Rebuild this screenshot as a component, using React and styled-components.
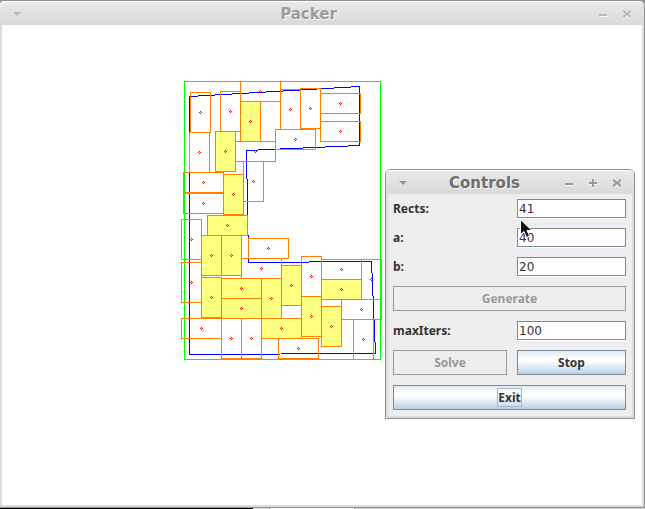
import React from "react";
import styled, { createGlobalStyle } from "styled-components";

const GlobalStyle = createGlobalStyle`
  * { box-sizing: border-box; }
  html, body, #root { height: 100%; margin: 0; }
  body { background: #8f8f8f; overflow: hidden; }
`;

const Desktop = styled.main`
  height: 100%;
  display: flex;
  flex-direction: column;
  position: relative;
  font-family: "DejaVu Sans", sans-serif;
`;

const MainWindow = styled.section`
  flex: 1;
  min-height: 0;
  display: flex;
  flex-direction: column;
  background: #dcdcdc;
  border: solid #8f8f8f;
  border-width: 1px 1px 1px 0;
  border-radius: 3px 5px 0 0;
  padding: 0 2px 2px;
`;

const ControlsWindow = styled.section`
  position: absolute;
  left: 385px;
  top: 169px;
  width: 250px;
  background: #dcdcdc;
  border: 1px solid #909090;
  border-radius: 6px 6px 0 0;
  padding: 0 2px 2px;
`;

const TitleBar = styled.header`
  flex: none;
  display: grid;
  grid-template-columns: auto 1fr auto;
  align-items: center;
  height: 24px;
  margin: 0 -2px;
  padding: 0 9px 0 12px;
  border-top: 1px solid #fff;
  border-radius: 5px 5px 0 0;
  background: linear-gradient(#e9e9e9, #d9d9d9);
  color: ${(p) => (p.$active ? "#6f6f6f" : "#9d9d9d")};
`;

const Title = styled.h1`
  margin: 0;
  text-align: center;
  font-size: 15px;
  line-height: 20px;
  font-weight: bold;
  text-shadow: 1px 1px 0 #f5f5f5;
`;

const WindowButtons = styled.div`
  display: flex;
  justify-content: flex-end;
  gap: 8px;
`;

const WindowButton = styled.button`
  display: block;
  width: 16px;
  height: 16px;
  padding: 0;
  border: 0;
  background: none;
  color: ${(p) => (p.$active ? "#989898" : "#b8b8b8")};
`;

const MenuButton = styled(WindowButton)`
  width: 10px;
`;

const Canvas = styled.div`
  flex: 1;
  min-height: 0;
  background: #fff;
  overflow: hidden;
`;

const Drawing = styled.svg`
  display: block;
`;

const Panel = styled.form`
  display: grid;
  grid-template-columns: 114px 1fr;
  gap: 10px;
  align-items: center;
  background: #eee;
  padding: 5px 6px 6px 5px;
  color: #333;
`;

const Label = styled.label`
  font: bold 12px/19px "Noto Sans", sans-serif;
`;

const Field = styled.input`
  width: 100%;
  height: 19px;
  padding: 0 1px;
  border: 1px solid #7a8a99;
  border-radius: 0;
  outline: 0;
  background: #fff;
  box-shadow: 0 1px 0 #fff;
  color: #333;
  font: 12px/16px "DejaVu Sans", sans-serif;
`;

const Button = styled.button`
  height: 25px;
  padding: 0;
  grid-column: ${(p) => (p.$wide ? "1 / -1" : "auto")};
  border: 1px solid #7a8a99;
  background: linear-gradient(#dde8f3 0%, #fff 32%, #fff 44%, #b8cfe5 100%);
  color: #333;
  font: bold 12px/16px "Noto Sans", sans-serif;

  &:disabled {
    border-color: #999;
    background: #eee;
    color: #999;
  }
`;

const FocusText = styled.span`
  outline: 1px solid #a3b8cc;
`;

const Pointer = styled.svg`
  position: absolute;
  left: 520px;
  top: 219px;
  pointer-events: none;
`;

const Strip = styled.footer`
  height: 1px;
  display: grid;
  grid-template-columns: 253px 16px 1px 84px 1px 1fr;
  background: #ccc;
`;

const StripPart = styled.span`
  background: ${(p) => p.$tone};
`;

const OPEN = [
  [190, 92, 0], [220, 91, 0], [240, 81, 1], [189, 132, 0], [235, 141, 1],
  [243, 161, 0], [280, 89, 0], [300, 88, 0], [275, 129, 1], [320, 93, 1],
  [320, 121, 1], [183, 172, 1], [183, 193, 1], [181, 219, 0], [248, 238, 1],
  [241, 258, 1], [181, 262, 0], [181, 318, 1], [221, 318, 0], [241, 318, 0],
  [301, 256, 0], [321, 259, 1], [361, 259, 0], [341, 299, 1], [353, 319, 0],
  [278, 338, 1],
];

const FILLED = [
  [240, 101, 0], [215, 131, 0], [223, 174, 0], [207, 215, 1], [201, 235, 0],
  [221, 235, 0], [201, 277, 0], [221, 278, 1], [221, 298, 1], [261, 278, 0],
  [261, 318, 1], [281, 265, 0], [301, 296, 0], [321, 279, 1], [321, 306, 0],
];

function Piece({ piece: [x, y, wide], fill }) {
  const w = wide ? 40 : 20;
  const h = wide ? 20 : 40;
  return (
    <>
      <rect x={x + 0.5} y={y + 0.5} width={w} height={h} fill={fill} stroke="#ff8000" />
      <path
        d={`M${x + w / 2} ${y + h / 2 - 1}h1v1h1v1h-1v1h-1v-1h-1v-1h1z`}
        fill="#f00"
      />
      <path d={`M${x + w / 2} ${y + h / 2}h1v1h-1z`} fill="#fff" />
    </>
  );
}

function Packing() {
  return (
    <Drawing width="400" height="350" viewBox="2 25 400 350" shapeRendering="crispEdges" role="img" aria-label="Packed rectangles">
      <rect x="184.5" y="81.5" width="196" height="278" fill="none" stroke="#0f0" />
      <path
        d="M189.5 96.5L359.5 86.5V145.5L246.5 150.5L248.5 262.5L371.5 261.5L375.5 353.5L189.5 354.5Z"
        fill="none"
        stroke="#00f"
      />
      {OPEN.map((p) => <Piece key={p.join()} piece={p} fill="none" />)}
      {FILLED.map((p) => <Piece key={p.join()} piece={p} fill="#ffff80" />)}
    </Drawing>
  );
}

const GLYPHS = {
  Minimize: "M4 8h8v2h-8z",
  Maximize: "M7 4h2v3h3v2h-3v3h-2v-3h-3v-2h3z",
  Close: "M4 5l1-1 3 3 3-3 1 1v1l-2 2 2 2v1l-1 1-3-3-3 3-1-1v-1l2-2-2-2z",
};

function Bar({ title, active, buttons }) {
  return (
    <TitleBar $active={active}>
      <MenuButton type="button" aria-label={`${title} menu`} $active={active}>
        <svg width="10" height="16"><path d="M1 6h8l-4 4z" fill="currentColor" /></svg>
      </MenuButton>
      <Title>{title}</Title>
      <WindowButtons>
        {buttons.map((name) => (
          <WindowButton key={name} type="button" aria-label={name} $active={active}>
            <svg width="16" height="16">
              <path d={GLYPHS[name]} fill="#f7f7f7" transform="translate(0 1)" />
              <path d={GLYPHS[name]} fill="currentColor" />
            </svg>
          </WindowButton>
        ))}
      </WindowButtons>
    </TitleBar>
  );
}

function NumberRow({ id, label, value }) {
  return (
    <>
      <Label htmlFor={id}>{label}</Label>
      <Field id={id} defaultValue={value} />
    </>
  );
}

export default function App() {
  return (
    <Desktop>
      <GlobalStyle />
      <MainWindow>
        <Bar title="Packer" buttons={["Minimize", "Close"]} />
        <Canvas><Packing /></Canvas>
      </MainWindow>
      <Strip>
        {["#000", "#ddd", "#888", "#fff", "#888", "#ccc"].map((tone, i) => (
          <StripPart key={i} $tone={tone} />
        ))}
      </Strip>
      <ControlsWindow>
        <Bar title="Controls" active buttons={["Minimize", "Maximize", "Close"]} />
        <Panel>
          <NumberRow id="rects" label="Rects:" value="41" />
          <NumberRow id="a" label="a:" value="40" />
          <NumberRow id="b" label="b:" value="20" />
          <Button type="button" $wide disabled>Generate</Button>
          <NumberRow id="iters" label="maxIters:" value="100" />
          <Button type="button" disabled>Solve</Button>
          <Button type="button">Stop</Button>
          <Button type="button" $wide><FocusText>Exit</FocusText></Button>
        </Panel>
      </ControlsWindow>
      <Pointer width="13" height="20" viewBox="0 0 13 20" aria-hidden="true">
        <path d="M.5 .5V15.5L4 12.5L6.5 18.5L9.5 17L7 11.5H12Z" fill="#111" stroke="#fff" />
      </Pointer>
    </Desktop>
  );
}
